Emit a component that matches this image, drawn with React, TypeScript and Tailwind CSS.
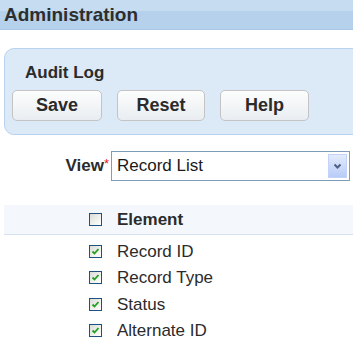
import React from "react";

const font = { fontFamily: '"Liberation Sans", Arial, sans-serif' };

function Check({ checked }: { checked: boolean }) {
  return (
    <span className="relative flex h-[13px] w-[13px] shrink-0 items-center justify-center border border-[#1c5180] bg-gradient-to-br from-[#dcdcd6] to-[#ffffff]">
      {checked && (
        <svg width="9" height="9" viewBox="0 0 9 9">
          <path d="M1.5 4.5 L3.5 6.5 L7.5 2" stroke="#21a121" strokeWidth="1.8" fill="none" />
        </svg>
      )}
    </span>
  );
}

function Btn({ label, w }: { label: string; w: string }) {
  return (
    <div
      className={`flex h-[31px] ${w} items-center justify-center rounded-[5px] border border-[#c4c4c4] bg-gradient-to-b from-[#fdfdfd] to-[#e9edf1] text-[18px] font-bold text-[#2b2b2b]`}
    >
      {label}
    </div>
  );
}

export default function App() {
  const rows = ["Record ID", "Record Type", "Status", "Alternate ID"];
  return (
    <div className="h-[339px] w-[353px] overflow-hidden bg-white" style={font}>
      <div className="flex h-[30px] items-center border-b border-[#a8c7e7] bg-[linear-gradient(to_bottom,#c6dcf1_0,#c6dcf1_11px,#b5d1ec_11px,#b5d1ec_100%)] pl-[4px]">
        <span className="text-[19px] font-bold leading-none text-[#2e2e2e]">Administration</span>
      </div>
      <div className="ml-[4px] mr-[-12px] mt-[18px] flex h-[87px] flex-col rounded-[10px] border border-[#b9d3ee] bg-[#dce9f7] pl-[7px]">
        <div className="mt-[15px] pl-[13px] text-[17px] font-bold leading-none text-[#2b2b2b]">Audit Log</div>
        <div className="mt-[9px] flex gap-[15px]">
          <Btn label="Save" w="w-[90px]" />
          <Btn label="Reset" w="w-[88px]" />
          <Btn label="Help" w="w-[89px]" />
        </div>
      </div>
      <div className="mt-[16px] flex items-center">
        <div className="flex w-[111px] items-center justify-end pr-[2px]">
          <span className="text-[17px] font-bold text-[#2b2b2b]">View</span>
          <span className="mb-[6px] text-[13px] leading-none text-[#e02020]">*</span>
        </div>
        <div className="flex h-[30px] w-[239px] items-center justify-between border border-[#7f9db9] bg-white pl-[5px] pr-[2px]">
          <span className="text-[17px] text-[#1a1a1a]">Record List</span>
          <span className="flex h-[24px] w-[19px] items-center justify-center border border-[#c3d3f9] bg-gradient-to-b from-[#e3ebfd] to-[#b8ccf6]">
            <svg width="9" height="7" viewBox="0 0 9 7">
              <path d="M1.5 1.5 L4.5 4.5 L7.5 1.5" stroke="#4d6185" strokeWidth="2" fill="none" />
            </svg>
          </span>
        </div>
      </div>
      <div className="ml-[4px] mt-[24px] flex h-[30px] items-center border-b border-[#d5e1ee] bg-[#f4f8fd] pl-[85px]">
        <Check checked={false} />
        <span className="ml-[15px] text-[17px] font-bold text-[#2b2b2b]">Element</span>
      </div>
      <div className="flex flex-col pt-[3px]">
        {rows.map((r) => (
          <div key={r} className="flex h-[26.5px] items-center pl-[89px]">
            <Check checked />
            <span className="ml-[15px] text-[17px] leading-none text-[#2b2b2b]">{r}</span>
          </div>
        ))}
      </div>
    </div>
  );
}
